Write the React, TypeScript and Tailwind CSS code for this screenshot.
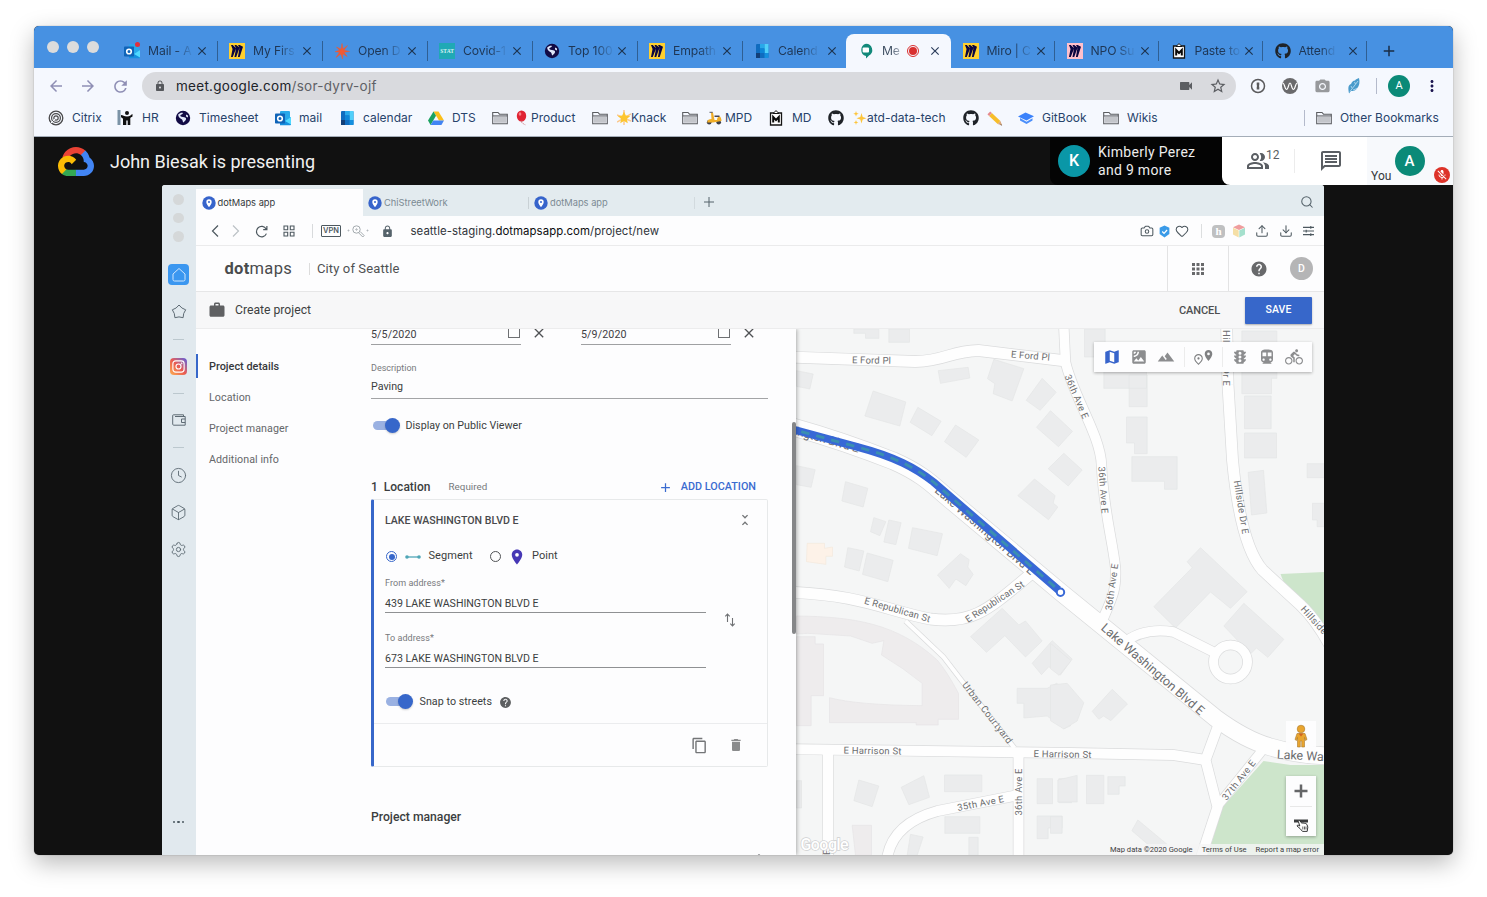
import React from "react";
import {
  MdAdd, MdApps, MdArrowBack, MdArrowForward, MdClose, MdContentCopy, MdDelete, MdDirectionsBike,
  MdDirectionsTransit, MdHelp, MdLock, MdMap, MdMicOff, MdMoreVert, MdOutlinePlace, MdOutlinePeopleAlt,
  MdPlace, MdRefresh, MdSatellite, MdStarBorder, MdTerrain, MdTraffic, MdUnfoldLess, MdVideocam, MdWork,
  MdOutlineMessage, MdPhotoCamera,
} from "react-icons/md";
import { FaGithub } from "react-icons/fa";
import { Box, Camera, Clock, Download, Heart, Search, Settings, Upload } from "lucide-react";

/* ---------- small brand drawings, all 16x16 ---------- */

const Outlook = () => (
  <svg viewBox="0 0 16 16" className="h-4 w-4">
    <rect x="5" y="1" width="10" height="10" rx="1" fill="#28a8ea" />
    <path d="M5 7l5.500 4L16 7v7.500a.8.8 0 0 1-.8.8H5z" fill="#1490df" />
    <path d="M10 11l6-4v7.500z" fill="#50d9ff" />
    <rect x="0" y="3.500" width="10" height="10" rx=".8" fill="#0f64b8" />
    <circle cx="5" cy="8.500" r="2.300" fill="none" stroke="#fff" strokeWidth="1.600" />
  </svg>
);
const OutlookBadge = () => (
  <div className="relative h-4 w-4">
    <Outlook />
    <span className="absolute -top-px right-0 h-[5px] w-[5px] rounded-full bg-[#e0303c]" />
  </div>
);
const Miro = ({ pink = false }: { pink?: boolean }) => (
  <svg viewBox="0 0 16 16" className="h-4 w-4">
    <rect width="16" height="16" fill={pink ? "#ffc0cb" : "#ffd02f"} />
    <path
      transform="translate(2 2) scale(.5)"
      fill="#0b0640"
      d="M17.392 0H13.900L17 4.808 10.444 0H6.949l3.102 6.300L3.494 0H0l3.050 8.131L0 24h3.494L10.050 6.985 6.949 24h3.494L17 5.494 13.899 24h3.493L24 3.672 17.392 0z"
    />
  </svg>
);
const Burst = () => (
  <svg viewBox="0 0 16 16" className="h-4 w-4">
    <path d="M8 .5L9 6l4.500-3.500L10 7.300l5.500 1.200L10 9.300l3.200 4.200-4.400-2.700L8.500 16l-1.700-5L2 14.500 5.500 9.300 1 8.700l4.500-1.500L2.500 4 7 6.200z" fill="#f05a33" stroke="#f05a33" strokeWidth=".5" />
  </svg>
);
const Stat = () => (
  <div className="flex h-4 w-4 items-center justify-center bg-[#20a9b5] font-['Liberation_Serif',serif] text-[5.500px] font-bold text-[#d7f3f4]">STAT</div>
);
const Globe = () => (
  <svg viewBox="0 0 16 16" className="h-4 w-4">
    <circle cx="8" cy="8" r="7.200" fill="#120b45" />
    <path d="M3.200 4.500c2-2 4-2 4.800-1.500-.5 1.500-2.600 1.500-2.800 3 1.600 1.400 4 .8 5.400 1.800 1.300 1-.3 3.600-2.400 4.600-.6-1-.3-2-1.200-2.900C5.600 8.300 3.400 8 3.200 4.500zM11 4.500l2 1v2l-2-1z" fill="#dfe6f8" />
  </svg>
);
const Calendar = () => (
  <svg viewBox="0 0 16 16" className="h-4 w-4">
    <rect x="2" y="1" width="12.500" height="14" rx="1" fill="#0f6cbf" />
    <path d="M6 1h4.500v4.500H6z" fill="#28a8ea" />
    <path d="M10.500 1h4v4.500h-4zM10.500 5.500h4V10h-4z" fill="#50d0fa" />
    <path d="M6 5.500h4.500V10H6z" fill="#0d86d8" />
    <path d="M2 10h4v5H2z" fill="#123f78" />
    <path d="M10.500 10h4v5h-4z" fill="#1490df" />
  </svg>
);
const Meet = () => (
  <svg viewBox="0 0 16 16" className="h-4 w-4">
    <path d="M8 .8a6.300 6.300 0 0 1 3 11.800L8 15.600V13A6.300 6.300 0 0 1 8 .8z" fill="#12897a" />
    <rect x="4.600" y="4.600" width="6.400" height="4.800" rx="1" fill="#fff" />
  </svg>
);
const Clipboard = () => (
  <svg viewBox="0 0 16 16" className="h-4 w-4">
    <path d="M2.500 3h11v12h-11z" fill="#fff" stroke="#141414" strokeWidth="1.300" />
    <path d="M5 3.500L8 .6l3 2.900z" fill="#fff" stroke="#141414" />
    <path d="M5.200 12.500V7L8 10l2.800-3v5.500" fill="none" stroke="#0a0a0a" strokeWidth="2" />
  </svg>
);
const Github = () => <FaGithub className="h-4 w-4 text-[#1f2328]" />;
const Citrix = () => (
  <svg viewBox="0 0 16 16" className="h-4 w-4" fill="none" stroke="#4a4a4c">
    <circle cx="8" cy="8" r="6.800" strokeWidth="1.300" />
    <circle cx="8" cy="8" r="4.400" strokeWidth="1.200" />
    <circle cx="8" cy="8" r="2.200" strokeWidth="1.200" />
    <path d="M7 9L3 13" stroke="#f5f8fe" strokeWidth="1" />
  </svg>
);
const Hr = () => (
  <svg viewBox="0 0 16 16" className="h-4 w-4">
    <path d="M.5 0h3v15h-3z" fill="#7b93a6" />
    <circle cx="10" cy="3" r="2" fill="#111" />
    <path d="M4 5c2 0 3 1.500 6 1.500S13.500 5 15.500 4v2.500c-1 .8-2 1-2.200 1.500V15h-2.600v-4.500H9.300V15H6V9C5.500 8 5 7.500 4 7.500z" fill="#111" />
  </svg>
);
const Drive = () => (
  <svg viewBox="0 0 16 16" className="h-4 w-4">
    <path d="M5.500 1.500h5L16 10.500h-5z" fill="#fbbf1a" />
    <path d="M5.500 1.500L0 10.500 2.600 15 8 5.800z" fill="#1ba261" />
    <path d="M5.400 10.500H16L13.400 15H2.600z" fill="#4285f4" />
  </svg>
);
const Folder = () => (
  <svg viewBox="0 0 16 16" className="h-4 w-4">
    <path d="M.7 2.500h5.300l1.500 1.700h7.800v9.600H.7z" fill="#f5f8fe" stroke="#5b5d61" strokeWidth="1.100" />
    <path d="M1.800 6.500h12.500v6.300H1.800z" fill="#c3c5ca" />
    <path d="M.7 5.900h14.600" stroke="#5b5d61" />
  </svg>
);
const GitBook = () => (
  <svg viewBox="0 0 16 16" className="h-4 w-4">
    <path d="M0 6.500l7.500-4L16 6.300 8.500 10.500z" fill="#3b82fb" />
    <path d="M2 8l6.500 3.700L14.500 8.300v2.300L8.500 14 2 10.500z" fill="#4b8ffb" />
  </svg>
);
const Balloon = () => (
  <svg viewBox="0 0 12 16" className="h-4 w-3">
    <ellipse cx="5.500" cy="6" rx="4.700" ry="5.600" fill="#e02434" />
    <ellipse cx="4" cy="4" rx="1.300" ry="1.800" fill="#f78088" />
    <path d="M4.500 11.300h2.200l-1 1.400zM6 12.500q1 1.500 4 2.800" fill="#d01c2c" stroke="#d9c9cc" strokeWidth=".5" />
  </svg>
);
const GlowStar = () => (
  <svg viewBox="0 0 14 16" className="h-4 w-[14px]">
    <path d="M7 0v15M0 5l14 6M14 4L0 12" stroke="#fbc98e" strokeWidth="1.500" />
    <path d="M7 1.500l1.800 4 4.400.4-3.400 3 1 4.400L7 11l-3.800 2.300 1-4.400-3.400-3 4.400-.4z" fill="#fdc62f" />
  </svg>
);
const Scooter = () => (
  <svg viewBox="0 0 16 16" className="h-4 w-4">
    <circle cx="3.200" cy="12.300" r="2.300" fill="#3c3f4a" />
    <circle cx="12.700" cy="12.300" r="2.300" fill="#3c3f4a" />
    <path d="M5 2.500h2L8.500 10H11c0-2 1-3.500 3-3.500.8 1 1.500 2.500 1.500 4.500L7 12.500H1.200C1.200 10 3 9 5.500 9z" fill="#f0ae28" />
    <path d="M8.500 5.500h5V7h-5z" fill="#4a4550" />
    <path d="M3.500 2.300h3.200" stroke="#55585f" />
  </svg>
);
const Sparkles = () => (
  <svg viewBox="0 0 14 16" className="h-4 w-[14px]" fill="#fdc53c">
    <path d="M8.500 3l1.200 4 3.800 1.200-3.800 1.300-1.200 4-1.200-4-3.800-1.300L7.300 7z" />
    <path d="M3 1l.7 2 2 .7-2 .7L3 6.500l-.7-2-2-.8 2-.7zM3 10l.6 1.800 1.800.6-1.800.7L3 15l-.6-1.900-1.800-.7 1.800-.6z" />
  </svg>
);
const Pencil = () => (
  <svg viewBox="0 0 16 16" className="h-4 w-4">
    <path d="M3.500 4.500l8.500 8" stroke="#f7bd2a" strokeWidth="4" />
    <path d="M1.800 2.900l1.700 1.600" stroke="#e58a8f" strokeWidth="4" />
    <path d="M10.700 14l2.700-2.900 1.800 4.400z" fill="#d9a578" />
    <path d="M14 14.200l1.200 1.300-1.800-.6z" fill="#333" />
  </svg>
);
const CloudLogo = () => (
  <svg viewBox="0 0 256 206" className="h-[29px] w-9">
    <path d="M170.250 56.820l22.250-22.250 1.480-9.370C153.440-11.670 89-7.490 52.460 33.910 42.310 45.410 34.780 59.750 30.760 74.550l7.970-1.120 44.500-7.340 3.440-3.510c19.800-21.740 53.270-24.670 76.130-6.170z" fill="#ea4335" />
    <path d="M224.200 73.920c-5.110-18.840-15.610-35.770-30.210-48.720L162.760 56.430c13.190 10.770 20.700 27 20.370 44.020v5.540c15.350 0 27.800 12.450 27.800 27.800s-12.450 27.490-27.800 27.490h-55.670l-5.470 5.930v33.340l5.470 5.240h55.670c39.930.31 72.550-31.550 72.860-71.480.19-24.200-11.740-46.880-31.790-60.490" fill="#4285f4" />
    <path d="M71.870 205.800h55.590v-44.510H71.870c-3.960 0-7.880-.85-11.480-2.500l-7.890 2.420-22.400 22.250-1.950 7.570c12.570 9.490 27.900 14.830 43.720 14.770" fill="#34a853" />
    <path d="M71.870 61.430C31.940 61.660-.24 94.230 0 134.160c.13 22.300 10.550 43.300 28.220 56.890l32.250-32.250c-13.990-6.320-20.210-22.780-13.890-36.780 6.320-13.990 22.790-20.200 36.780-13.880 6.170 2.780 11.100 7.720 13.890 13.880l32.250-32.240c-13.720-17.940-35.040-28.430-57.630-28.350" fill="#fbbc05" />
  </svg>
);

/* ---------- outer browser ---------- */

type Tab = { icon: React.ReactNode; label: string; bar?: boolean };
const leftTabs: Tab[] = [
  { icon: <OutlookBadge />, label: "Mail - A", bar: true },
  { icon: <Miro />, label: "My Firs", bar: true },
  { icon: <Burst />, label: "Open D", bar: true },
  { icon: <Stat />, label: "Covid-1", bar: true },
  { icon: <Globe />, label: "Top 100", bar: true },
  { icon: <Miro />, label: "Empath", bar: true },
  { icon: <Calendar />, label: "Calend" },
];
const rightTabs: Tab[] = [
  { icon: <Miro />, label: "Miro | C", bar: true },
  { icon: <Miro pink />, label: "NPO Su", bar: true },
  { icon: <Clipboard />, label: "Paste to", bar: true },
  { icon: <Github />, label: "Attend", bar: true },
];

function IdleTab({ tab, box }: { tab: Tab; box: string }) {
  return (
    <div className={"flex shrink-0 items-center pt-2 pl-[11.500px] " + box}>
      {tab.icon}
      <span className="ml-2 flex w-[47px]">
        <span className="bg-gradient-to-r from-[#1e3654] from-60% to-[#1e3654]/10 bg-clip-text font-['Inter',sans-serif] text-[12.200px] tracking-[-0.15px] whitespace-nowrap text-transparent">{tab.label}</span>
      </span>
      <MdClose className="h-[14px] w-[14px] text-[#1d3450]" />
      {tab.bar && <span className="ml-auto h-5 w-px bg-[#2f5f93]" />}
    </div>
  );
}

function TabStrip() {
  return (
    <div className="flex h-[42px] bg-[#4791e2]">
      <div className="flex w-[78.600px] shrink-0 items-center gap-2 pl-[13px]">
        {[0, 1, 2].map((i) => (
          <span key={i} className="h-3 w-3 rounded-full bg-[#dcdcdc]" />
        ))}
      </div>
      {leftTabs.map((t) => <IdleTab key={t.label} tab={t} box="w-[105px]" />)}
      <div className="mt-2 -ml-[1.600px] flex h-[34px] w-[105px] shrink-0 items-center rounded-t-lg bg-[#f5f8fe] pl-3">
        <Meet />
        <span className="ml-2 flex w-[25px]">
          <span className="bg-gradient-to-r from-[#3c4c60] from-50% to-[#3c4c60]/40 bg-clip-text font-['Inter',sans-serif] text-[12.200px] tracking-[-0.2px] text-transparent">Me</span>
        </span>
        <span className="flex h-3 w-3 items-center justify-center rounded-full border border-[#d93030]">
          <span className="h-2 w-2 rounded-full bg-[#d93030]" />
        </span>
        <MdClose className="ml-[9px] h-[14px] w-[14px] text-[#2c3e5c]" />
      </div>
      {rightTabs.map((t) => <IdleTab key={t.label} tab={t} box="w-[104px]" />)}
      <MdAdd className="mt-[16px] ml-[13px] h-[18px] w-[18px] text-[#1a2c44]" />
    </div>
  );
}

function Toolbar() {
  return (
    <div className="flex h-9 items-center bg-[#f5f8fe]">
      <div className="flex w-[108px] shrink-0 items-center gap-[14px] pl-[13px] text-[#8f8fb5]">
        <MdArrowBack className="h-[18px] w-[18px]" />
        <MdArrowForward className="h-[18px] w-[18px]" />
        <MdRefresh className="h-[19px] w-[19px]" />
      </div>
      <div className="flex h-7 w-[1094px] shrink-0 items-center rounded-full bg-[#d9dade] pl-3">
        <MdLock className="h-3 w-3 text-[#56585c]" />
        <span className="ml-[10px] font-['Inter',sans-serif] text-[13.500px] tracking-[0.28px] text-[#202329]">
          meet.google.com<span className="text-[#5f6166]">/sor-dyrv-ojf</span>
        </span>
        <MdVideocam className="ml-auto h-4 w-4 text-[#5c5e62]" />
        <MdStarBorder className="mr-[9px] ml-[15px] h-[18px] w-[18px] text-[#5c5e62]" />
      </div>
      <div className="ml-[6px] flex w-8 justify-center">
        <svg viewBox="0 0 16 16" className="h-4 w-4">
          <circle cx="8" cy="8" r="6.500" fill="none" stroke="#5a5a5c" strokeWidth="1.500" />
          <path d="M6.700 4.500h2.600v2.800L8.800 8l.5.700v2.800H6.700V8.700l.5-.7-.5-.7z" fill="#5a5a5c" />
        </svg>
      </div>
      <div className="flex w-8 justify-center">
        <svg viewBox="0 0 16 16" className="h-4 w-4">
          <circle cx="8" cy="8" r="8" fill="#6a6a6c" />
          <path d="M.5 5C3 5 2.500 11.500 4.500 11.500S6.500 5 8 5s1.500 6.500 3.500 6.500S13 5 15.500 5" fill="none" stroke="#fff" strokeWidth="1.200" />
        </svg>
      </div>
      <div className="flex w-8 justify-center"><MdPhotoCamera className="h-[17px] w-[17px] text-[#97999c]" /></div>
      <div className="flex w-8 justify-center">
        <svg viewBox="0 0 16 16" className="h-4 w-4">
          <path d="M13 0c1 4 .5 8-2 10.500-2 2.500-4 2.500-6 2.500L3 15.500C2 10 2 7 5 6c1-2 2-3.500 4-3.500C10 1 11.500.5 13 0z" fill="#4a9bcb" />
          <path d="M4 13.500L12 3M5 8l1 2M8.500 4l1 2M7 12l4-1.500" stroke="#bfe0f3" strokeWidth=".8" />
        </svg>
      </div>
      <span className="ml-[6px] h-4 w-px bg-[#b4bacb]" />
      <span className="ml-[11px] flex h-[22px] w-[22px] items-center justify-center rounded-full bg-[#0b8a78] font-['Roboto',sans-serif] text-[11px] text-white">A</span>
      <MdMoreVert className="ml-[13px] h-[18px] w-[18px] text-[#1c1650]" />
    </div>
  );
}

function Bookmark({ icon, label, extra, box, gap = "gap-2" }: { icon: React.ReactNode; label?: string; extra?: React.ReactNode; box: string; gap?: string }) {
  return (
    <div className={"flex shrink-0 items-center whitespace-nowrap " + box + " " + gap}>
      {icon}
      <span className="flex items-center">
        {extra}
        <span className="font-['Inter',sans-serif] text-[12px] text-[#27436b]">{label}</span>
      </span>
    </div>
  );
}

function Bookmarks() {
  return (
    <div className="flex h-[33px] items-center border-b border-[#a4adb8] bg-[#f5f8fe] pb-[4px] pl-[14px]">
      <Bookmark icon={<Citrix />} label="Citrix" box="w-[69px]" />
      <Bookmark icon={<Hr />} label="HR" box="w-[58px]" gap="gap-[9px]" />
      <Bookmark icon={<Globe />} label="Timesheet" box="w-[100px]" />
      <Bookmark icon={<Outlook />} label="mail" box="w-[64px]" />
      <Bookmark icon={<Calendar />} label="calendar" box="w-[89px]" />
      <Bookmark icon={<Drive />} label="DTS" box="w-[64px]" />
      <Bookmark icon={<Folder />} extra={<span className="mr-[3px]"><Balloon /></span>} label="Product" box="w-[100px]" />
      <Bookmark icon={<Folder />} extra={<GlowStar />} label="Knack" box="w-[90px]" gap="gap-[9px]" />
      <Bookmark icon={<Folder />} extra={<span className="mr-[3px]"><Scooter /></span>} label="MPD" box="w-[86px]" />
      <Bookmark icon={<Clipboard />} label="MD" box="w-[60px]" />
      <Bookmark icon={<Github />} extra={<Sparkles />} label="atd-data-tech" box="w-[135px]" gap="gap-[9px]" />
      <Bookmark icon={<Github />} extra={<Pencil />} box="w-[55px]" />
      <Bookmark icon={<GitBook />} label="GitBook" box="w-[85px]" />
      <Bookmark icon={<Folder />} label="Wikis" box="w-[201px]" />
      <span className="mr-[11px] h-4 w-px bg-[#b4bacb]" />
      <Bookmark icon={<Folder />} label="Other Bookmarks" box="w-[130px]" />
    </div>
  );
}

/* ---------- meeting header ---------- */

function MeetHeader() {
  return (
    <div className="flex h-12 shrink-0 font-['Roboto',sans-serif]">
      <div className="flex flex-1 items-center pl-6">
        <CloudLogo />
        <span className="ml-4 text-[18px] text-[#f1f1f1]">John Biesak is presenting</span>
      </div>
      <div className="flex w-[172px] items-center rounded-bl-lg bg-[#040404] pl-2">
        <span className="flex h-8 w-8 items-center justify-center rounded-full bg-[#0a97a7] text-[16px] font-medium text-white">K</span>
        <span className="ml-2 text-[14px] leading-[18px] tracking-[0.3px] text-[#ededed]">
          Kimberly Perez
          <br />
          and 9 more
        </span>
      </div>
      <div className="flex w-[145px] bg-[#040404]">
        <div className="flex w-[145px] items-center rounded-bl-lg bg-white text-[#5a5e63]">
          <div className="flex w-[73px] items-center border-r border-[#ececec] pl-6">
            <MdOutlinePeopleAlt className="h-6 w-6" />
            <span className="-mt-3 -ml-[4px] text-[12px]">12</span>
          </div>
          <div className="flex w-[72px] justify-center"><MdOutlineMessage className="h-6 w-6" /></div>
        </div>
      </div>
      <div className="flex w-[86px] bg-[#f7f9fc]">
        <span className="mt-[31px] ml-1 text-[12px] leading-4 tracking-[0.1px] text-[#35383b]">You</span>
        <span className="mt-[9px] ml-[3px] flex h-[30px] w-[30px] items-center justify-center rounded-full bg-[#0b8a78] text-[15px] font-medium text-white">A</span>
        <span className="mt-[30px] ml-[9px] flex h-4 w-4 items-center justify-center rounded-full bg-[#dd3329]">
          <MdMicOff className="h-3 w-3 text-white" />
        </span>
      </div>
    </div>
  );
}

/* ---------- shared screen ---------- */

function OperaSidebar() {
  const thin = "h-[17px] w-[17px] text-[#5e6b74]";
  return (
    <div className="flex w-[34px] shrink-0 flex-col items-center bg-[#e1e9ee] pr-[1px]">
      <div className="mt-[9px] flex flex-col gap-[8px]">
        {[0, 1, 2].map((i) => (
          <span key={i} className="h-[10.500px] w-[10.500px] rounded-full bg-[#d5d8d9]" />
        ))}
      </div>
      <div className="mt-[22.500px] flex h-[21px] w-[21px] items-center justify-center rounded-sm bg-[#3b97f0]">
        <svg viewBox="0 0 16 16" className="h-4 w-4" fill="none" stroke="#cfe6fd">
          <path d="M2 7l6-5.500L14 7v5.500A1.500 1.500 0 0 1 12.500 14h-9A1.500 1.500 0 0 1 2 12.500z" />
        </svg>
      </div>
      <svg viewBox="0 0 16 16" className="mt-[19px] h-4 w-4" fill="none" stroke="#5e6b74">
        <path d="M8 1l2.900 3L14.700 5.800l-2 3.700-.6 4.200L8 12.900l-4.100.8-.6-4.200-2-3.700L5.100 4z" strokeLinejoin="round" />
      </svg>
      <span className="mt-[19px] h-px w-[11px] bg-[#bcc8ce]" />
      <div className="mt-[18px] flex h-[17px] w-[17px] items-center justify-center rounded bg-gradient-to-tr from-[#fbad50] via-[#e95950] to-[#5851db]">
        <svg viewBox="0 0 16 16" className="h-[15px] w-[15px]" fill="none" stroke="#fff" strokeWidth="1.200">
          <rect x="2" y="2" width="12" height="12" rx="3" />
          <circle cx="8" cy="8" r="2.700" />
          <circle cx="11.300" cy="4.700" r=".3" />
        </svg>
      </div>
      <span className="mt-[18px] h-px w-[11px] bg-[#bcc8ce]" />
      <svg viewBox="0 0 14 14" className="mt-[19px] h-[14px] w-[14px]" fill="none" stroke="#5e6b74">
        <path d="M11.500 3.500V1.800H1.500a.8.8 0 0 0-.8.900v8.500c0 .6.400 1 1 1h11.500V3.500H3M13.200 6H9.500v3.500h3.700" />
      </svg>
      <span className="mt-[20px] h-px w-[11px] bg-[#bcc8ce]" />
      <Clock className={"mt-[19px] " + thin} strokeWidth={1.300} />
      <Box className={"mt-[20px] " + thin} strokeWidth={1.300} />
      <Settings className={"mt-[20px] " + thin} strokeWidth={1.300} />
      <div className="mt-auto mb-[32px] flex gap-[2px]">
        {[0, 1, 2].map((i) => (
          <span key={i} className="h-[2.500px] w-[2.500px] rounded-full bg-[#4b5961]" />
        ))}
      </div>
    </div>
  );
}

const PinBadge = () => (
  <svg viewBox="0 0 14 14" className="h-[14px] w-[14px] shrink-0">
    <circle cx="7" cy="7" r="6.700" fill="#3764cb" />
    <path d="M7 11.200C5.500 9 4.300 7.600 4.300 5.900a2.700 2.700 0 0 1 5.400 0C9.700 7.600 8.500 9 7 11.200z" fill="#fff" />
    <circle cx="7" cy="5.900" r="1" fill="#3764cb" />
  </svg>
);

function OperaTabs() {
  return (
    <div className="flex h-[31px] shrink-0 items-end bg-[#e3ebef] font-['Inter',sans-serif] text-[9.300px]">
      <div className="flex h-[27px] w-[167px] items-center gap-[2px] bg-[#fdfdfe] pl-[5.500px] text-[#33373a]">
        <PinBadge />
        <span>dotMaps app</span>
      </div>
      <div className="flex h-[27px] w-[166px] items-center gap-[2px] pl-[5px] text-[#7b8a93]">
        <PinBadge />
        <span>ChiStreetWork</span>
        <span className="ml-auto h-3 w-px bg-[#c9d1d5]" />
      </div>
      <div className="flex h-[27px] w-[166px] items-center gap-[2px] pl-[5px] text-[#7b8a93]">
        <PinBadge />
        <span>dotMaps app</span>
        <span className="ml-auto h-3 w-px bg-[#d2dade]" />
      </div>
      <svg viewBox="0 0 12 12" className="mb-[8px] ml-[8px] h-3 w-3" stroke="#55626a"><path d="M6 1v10M1 6h10" /></svg>
      <Search className="mr-[10px] mb-[7px] ml-auto h-[14px] w-[14px] text-[#55626a]" strokeWidth={1.800} />
    </div>
  );
}

function OperaToolbar() {
  return (
    <div className="flex h-[30px] shrink-0 items-center border-b border-[#ebebec] pt-px pl-[8px] text-[#4d585f]">
      <svg viewBox="0 0 21 14" className="h-[14px] w-[21px]" fill="none" stroke="currentColor" strokeWidth="1.200"><path d="M14 1.500L8.500 7l5.500 5.500" /></svg>
      <svg viewBox="0 0 21 14" className="h-[14px] w-[21px]" fill="none" stroke="#bcc2c6" strokeWidth="1.200"><path d="M8 1.500L13.500 7 8 12.500" /></svg>
      <svg viewBox="0 0 14 14" className="mr-[10px] ml-[9px] h-[13px] w-[13px]" fill="none" stroke="currentColor" strokeWidth="1.300">
        <path d="M12.300 9.300A5.600 5.600 0 1 1 12 4.300M12.800 1v4H8.800" />
      </svg>
      <svg viewBox="0 0 12 12" className="mx-[5px] h-3 w-3" fill="none" stroke="currentColor" strokeWidth="1.100">
        <path d="M1 1h3.700v3.700H1zM7.300 1H11v3.700H7.300zM1 7.300h3.700V11H1zM7.300 7.300H11V11H7.300z" />
      </svg>
      <span className="ml-[12px] h-[14px] w-px bg-[#d8dadc]" />
      <span className="ml-[8px] flex h-[12px] w-[20px] items-center justify-center rounded-[1px] border border-[#4d585f] font-['Inter',sans-serif] text-[7.500px] font-semibold text-[#4d585f]">VPN</span>
      <svg viewBox="0 0 22 14" className="ml-[6px] h-[14px] w-[22px]" fill="none" stroke="#a4abaf">
        <circle cx="9.500" cy="5.500" r="3.700" />
        <circle cx="9.500" cy="5.500" r=".7" />
        <path d="M11.500 8.700l4.300 4.300 1.300-1.500-4-4" />
        <circle cx="1.500" cy="6.500" r=".5" />
        <circle cx="20.500" cy="6.500" r=".5" />
      </svg>
      <MdLock className="ml-[12px] h-[13px] w-[13px] text-[#56636b]" />
      <span className="ml-[16.500px] pt-px font-['Inter',sans-serif] text-[11.400px] tracking-[0.06px] text-[#30343a]">
        seattle-staging.<span className="text-[#0c0d0f]">dotmapsapp.com</span>/project/new
      </span>
      <div className="ml-auto flex items-center">
        <Camera className="mx-[2px] h-[14px] w-[14px]" strokeWidth={1.800} />
        <svg viewBox="0 0 12 14" className="mx-[3px] h-[13px] w-[11px]">
          <path d="M6 .5l5.300 2.300v7L6 13.500.7 9.800v-7z" fill="#3a9be8" />
          <path d="M3.500 7l2 2 3.300-3.600" fill="none" stroke="#fff" strokeWidth="1.400" />
        </svg>
        <Heart className="mx-[2px] h-[14px] w-[14px]" strokeWidth={1.800} />
        <span className="mx-[10px] h-[14px] w-px bg-[#dcdedf]" />
        <span className="flex h-[13px] w-[13px] items-center justify-center rounded-sm bg-[#bfc0c1] font-['Liberation_Serif',serif] text-[11px] font-bold text-white">h</span>
        <svg viewBox="0 0 14 14" className="ml-[7px] h-[14px] w-[14px]">
          <path d="M7 .5l6 2.700L7 6 1 3.200z" fill="#ef9d9d" />
          <path d="M1 3.800l5.700 2.800v6.800L1 10.600z" fill="#f5dfa6" />
          <path d="M13 3.800L7.300 6.600v6.800l5.700-2.800z" fill="#a5e0cd" />
        </svg>
        <Upload className="ml-[9px] h-[14px] w-[14px]" strokeWidth={1.800} />
        <Download className="ml-[10px] h-[14px] w-[14px]" strokeWidth={1.800} />
        <svg viewBox="0 0 12 12" className="mx-[10px] h-3 w-[11px]" fill="none" stroke="currentColor" strokeWidth="1.200">
          <path d="M0 2h12M0 6h12M0 10h12M8.500.5v3M3.500 4.500v3M8.500 8.500v3" />
        </svg>
      </div>
    </div>
  );
}

function AppHeader() {
  return (
    <div className="flex h-[46px] shrink-0 items-center border-b border-[#e6e6e7] bg-[#fdfdfe] font-['Roboto',sans-serif] text-[#4a4b4d]">
      <span className="ml-[28.500px] w-[84.500px] text-[16.500px] leading-5 tracking-[0.3px]">
        <b className="font-bold">dot</b>maps
      </span>
      <span className="h-3 w-px bg-[#dcdcdc]" />
      <span className="ml-[7px] pt-px text-[13px] tracking-[0.12px] text-[#4f5153]">City of Seattle</span>
      <div className="ml-auto flex h-full items-center">
        <div className="flex h-full w-[62px] items-center justify-center border-x border-[#e3e3e4]">
          <MdApps className="h-[18px] w-[18px] text-[#68696b]" />
        </div>
        <MdHelp className="ml-[21px] h-[18px] w-[18px] text-[#68696b]" />
        <span className="mr-[11px] ml-[22px] flex h-[23px] w-[23px] items-center justify-center rounded-full bg-[#b5b5b6] text-[10.500px] font-medium text-white">D</span>
      </div>
    </div>
  );
}

function ActionBar() {
  return (
    <div className="flex h-[37px] shrink-0 items-center border-b border-[#ececed] bg-[#f7f7f8] pl-[12px] font-['Roboto',sans-serif]">
      <MdWork className="h-[18px] w-[18px] text-[#5f6062]" />
      <span className="ml-[9px] pt-px text-[12.200px] text-[#3d3f41]">Create project</span>
      <span className="ml-auto pt-[2px] text-[11px] font-medium tracking-[-0.1px] text-[#4e4f51]">CANCEL</span>
      <span className="mr-[12px] ml-[25px] flex h-[27px] w-[67px] items-center justify-center rounded-[1px] bg-[#3767ca] text-[10.500px] font-medium tracking-[0.1px] text-white shadow-[0_1px_2px_rgba(0,0,0,0.3)]">SAVE</span>
    </div>
  );
}

const Switch = () => (
  <span className="relative -mt-[2px] -ml-px h-[15px] w-[28px]">
    <span className="absolute top-[3px] left-px h-[9px] w-[23px] rounded-full bg-[#9ab1e2]" />
    <span className="absolute top-0 right-0 h-[15px] w-[15px] rounded-full bg-[#3767ca] shadow-[0_1px_2px_rgba(0,0,0,0.2)]" />
  </span>
);

function DateField({ value }: { value: string }) {
  return (
    <div className="flex h-[16px] w-[210px] shrink-0 items-start">
      <div className="flex h-[16px] w-[150px] items-start justify-between border-b border-[#9fa0a2]">
        <span className="text-[10.700px] leading-[12px] tracking-[0.1px] text-[#3e4043]">{value}</span>
        <span className="mr-px h-[9px] w-[12px] border border-t-0 border-[#6e7073]" />
      </div>
      <MdClose className="-mt-[4px] ml-[10px] h-4 w-4 text-[#505255]" />
    </div>
  );
}

function Field({ label, value }: { label: string; value: string }) {
  return (
    <div>
      <div className="flex h-[16px] items-center pt-[2px] text-[9px] tracking-[0.06px] text-[#77797c]">{label}</div>
      <div className="flex h-[22px] items-center border-b border-[#8f9193] pt-[5px] text-[10.600px] text-[#3b3d40]">{value}</div>
    </div>
  );
}

function LocationCard() {
  return (
    <div className="flex h-[268px] w-[397px] flex-col rounded-[2px] border border-l-[3px] border-[#e7e9ea] border-l-[#3767ca]">
      <div className="mt-[10px] flex h-5 items-center justify-between pr-[14px] pl-[11px]">
        <span className="pt-[2px] text-[10.600px] font-medium text-[#48494c]">LAKE WASHINGTON BLVD E</span>
        <MdUnfoldLess className="h-[16px] w-[16px] text-[#737577]" />
      </div>
      <div className="mt-[14px] flex h-6 items-center pt-px pl-[12px] text-[11px] tracking-[0.05px] text-[#3b3d40]">
        <span className="flex h-[11px] w-[11px] items-center justify-center rounded-full border border-[#3767ca]">
          <span className="h-[6px] w-[6px] rounded-full bg-[#3767ca]" />
        </span>
        <svg viewBox="0 0 16 6" className="ml-[8px] h-[6px] w-4">
          <path d="M2 3h12" stroke="#4fa6b6" strokeWidth="1.300" />
          <circle cx="2" cy="3" r="1.800" fill="#4fa6b6" />
          <circle cx="14" cy="3" r="1.800" fill="#4fa6b6" />
        </svg>
        <span className="ml-[7.500px] w-[61px]">Segment</span>
        <span className="h-[11px] w-[11px] rounded-full border border-[#505255]" />
        <MdPlace className="ml-[7px] h-[18px] w-[18px] text-[#4637b5]" />
        <span className="ml-[6.500px]">Point</span>
      </div>
      <div className="mt-[7px] flex items-center pl-[11px]">
        <div className="flex w-[321px] flex-col gap-[17px]">
          <Field label="From address*" value="439 LAKE WASHINGTON BLVD E" />
          <Field label="To address*" value="673 LAKE WASHINGTON BLVD E" />
        </div>
        <svg viewBox="0 0 12 14" className="-mt-[3px] ml-[18px] h-[14px] w-3" fill="none" stroke="#6e7073" strokeWidth="1.100">
          <path d="M3.500 9V1M1.300 3.300L3.500 1l2.200 2.300M8.500 5v8M6.300 10.700L8.500 13l2.200-2.300" />
        </svg>
      </div>
      <div className="mt-[22px] flex h-6 items-center pt-px pl-[12px] text-[10.700px] text-[#3b3d40]">
        <Switch />
        <span className="ml-[6.500px] tracking-[0.05px]">Snap to streets</span>
        <MdHelp className="ml-[7px] h-[13px] w-[13px] text-[#5d5f61]" />
      </div>
      <div className="mt-auto flex h-[43px] items-center justify-end border-t border-[#ebecee] pr-[23px] text-[#737577]">
        <MdContentCopy className="h-[17px] w-[17px]" />
        <MdDelete className="ml-[20px] h-[16px] w-[16px] text-[#8a8b8c]" />
      </div>
    </div>
  );
}

function FormPanel() {
  const nav = ["Project details", "Location", "Project manager", "Additional info"];
  return (
    <div className="relative z-10 flex w-[599.500px] shrink-0 bg-[#fdfdfe] font-['Roboto',sans-serif] shadow-[1px_0_4px_rgba(0,0,0,0.3)]">
      <div className="w-[175px] shrink-0 pt-[22px]">
        {nav.map((n, i) => (
          <div key={n} className="flex h-[31px] items-center">
            <span className={i === 0 ? "-mt-px h-6 w-[2px] bg-[#3767ca]" : "h-6 w-[2px]"} />
            <span className={i === 0 ? "ml-[11px] pt-px text-[10.900px] font-medium text-[#36383b]" : "ml-[11px] pt-px text-[10.700px] tracking-[0.06px] text-[#65676a]"}>{n}</span>
          </div>
        ))}
      </div>
      <div className="w-[397px] shrink-0">
        <div className="flex">
          <DateField value="5/5/2020" />
          <DateField value="5/9/2020" />
        </div>
        <div className="mt-[15px] flex h-[16px] items-center pt-[2px] text-[9px] text-[#77797c]">Description</div>
        <div className="flex h-[23px] items-center border-b border-[#a3a4a6] text-[10.700px] text-[#3b3d40]">Paving</div>
        <div className="mt-[15px] flex h-6 items-center pl-[2px] text-[10.700px] text-[#3b3d40]">
          <Switch />
          <span className="ml-[5.500px]">Display on Public Viewer</span>
        </div>
        <div className="mt-[37px] flex h-6 items-center">
          <span className="text-[12px] font-medium text-[#3b3d40]">1</span>
          <span className="ml-[6px] text-[12px] font-medium text-[#3b3d40]">Location</span>
          <span className="ml-[18px] text-[9.800px] tracking-[0.06px] text-[#77797c]">Required</span>
          <MdAdd className="ml-auto h-[15px] w-[15px] text-[#3a6bd0]" />
          <span className="mr-[12px] ml-[7.500px] pt-px text-[10.800px] font-medium text-[#3a6bd0]">ADD LOCATION</span>
        </div>
        <LocationCard />
        <div className="mt-[40px] flex h-5 items-center text-[12.200px] font-medium text-[#3b3d40]">Project manager</div>
        <svg viewBox="0 0 8 3" className="mt-[27px] mr-[5px] ml-auto h-[3px] w-2"><path d="M0 3L4 0l4 3z" fill="#77797c" /></svg>
      </div>
      <span className="absolute top-[93px] right-0 h-[212px] w-[3.500px] rounded-full bg-[#858688]" />
    </div>
  );
}

/* ---------- map drawing ---------- */

const roads: { d: string; w: number }[] = [
  { d: "M905 621L943 657 963 683 1014 748", w: 4 },
  { d: "M785 357L915 361.500C945 361 950 351 978 350.500L1066 361", w: 11 },
  { d: "M1063 320L1065 362C1072 395 1100 435 1101 465C1103 510 1112 540 1115 568C1116 590 1112 597 1102 620", w: 9.500 },
  { d: "M1226 320L1227.500 385 1232 460Q1240 545 1262 570L1300 605Q1316 620 1332 650", w: 11 },
  { d: "M785 592C860 594 890 612 930 619C975 625 990 607 1034 571", w: 11 },
  { d: "M785 749L1070 753 1173 755 1205 760", w: 10 },
  { d: "M1219 722L1205 760 1217 807 1199 862", w: 10 },
  { d: "M1217 806L1262 750", w: 9 },
  { d: "M1018 753V865", w: 10 },
  { d: "M1018 795L937 811Q890 824 886 862", w: 10 },
  { d: "M827.500 749V865", w: 10.500 },
  { d: "M1122 644Q1142 627 1173 632L1213 652", w: 9.500 },
  { d: "M785 425C830 437 870 452 893 461C925 475 935 488 950 500L1060 592 1215 718Q1245 740 1270 747Q1300 756 1335 756", w: 17 },
];
const route = "M793 429.500L857 447C895 457 915 468 933 482L1058 590";

const Label = ({ x, y, r = 0, len, size = 9.500, children }: { x: number; y: number; r?: number; len: number; size?: number; children: string }) => (
  <text x={x} y={y} transform={`rotate(${r} ${x} ${y})`} textLength={len} fontSize={size} textAnchor="middle" dominantBaseline="central">
    {children}
  </text>
);

function StreetMap() {
  return (
    <svg viewBox="795.5 329.500 528.5 525" className="h-full w-full bg-[#f5f6f6]" fontFamily="Roboto, sans-serif">
      <g fill="#cde5cb">
        <path d="M1280 574L1324 572V640L1290 600z" />
        <path d="M1263 761L1290 765H1324V856H1207L1222 807z" />
      </g>
      <g transform="translate(790 325) scale(.33333)" fill="#ebeced" stroke="#e4e5e6" strokeWidth="2">
        <path d="M190 12h75v28h-40v-15h-35zM295 12h62v40h-62zM18 137l50 10-10 45-40-8z" />
        <path d="M443 137l90-10 5 32-88 16zM248 198l98 33-18 72-105-30zM382 247l70 42-28 43-65-40zM495 300l70 45-38 52-65-47z" />
        <path d="M610 103l90 28-35 97-57-22 5-30-22-15zM755 160l42 42-48 54-42-30zM780 257l66 62-42 46-66-58zM820 385l55 50-42 48-60-52z" />
        <path d="M732 462l62 50-6 22 14 12-28 38-92-72zM18 422l56 12-12 53-44-8zM165 470l67 20-14 56-64-18zM250 578l36 12-18 42-28-12zM295 585l37 8-16 66-36-8z" />
        <path d="M366 608l90 18-16 66-86-22zM172 668l48 10-14 60-44-12zM230 684l78 22-16 64-76-22zM510 686l26 18-4 22 16 22-22 34-30-20-20 28-35-40z" />
        <path d="M50 655h52v15l24-4v28h-20v24l-58-8z" fill="#fdf2e8" stroke="#f3e8dd" />
        <path d="M882 12h62v84h-62zM940 140h128v50h-128zM1016 150h54v95h-54zM1008 276h62v110h-38v-32h-24zM1024 395h136v98h-38v-24h-98z" />
        <path d="M1354 18h105v142h-16v46h-89zM1362 213h80v98h-80zM1362 324h96v75h-96zM1373 442l46-6 10 128-46 6zM1550 416h52v42h-52zM1566 535h40v70h-26v-20h-14z" />
      </g>
      <g transform="translate(790 590) scale(.33333)" fill="#eeeced" stroke="#e6e4e5" strokeWidth="2">
        <path d="M18 78C190 80 320 100 440 210Q470 245 504 310V388H443V405H377V398H117V323Q200 345 395 347V280Q340 235 273 195L280 152 245 160 180 138 52 130 18 132z" />
        <path d="M18 140h56v22h25v155h-37v90H18z" />
        <path d="M185 706h58v90h-48z" />
      </g>
      <g transform="translate(790 590) scale(.33333)" fill="#ebeced" stroke="#e4e5e6" strokeWidth="2">
        <path d="M205 570l60 18-20 62-55-18zM332 592l68-35 17 65-62 22zM462 555h112v50h-112zM463 680h105v50h-105zM360 733l38 8-18 55h-30zM535 742h28v54h-28zM18 572h15v82H18z" />
        <path d="M540 140l95-85 50 50 20-12 50 60-50 48-62-64-55 50zM785 152l60 55-35 48-35-25-22 24-28-34zM680 295h90l28-15 42 28v100l-20 8-50-38-70 6v-44h-20z" />
        <path d="M740 566h46v75h-46zM805 566h38v72h-38zM740 678h75v36h-42v32h-33z" />
      </g>
      <g transform="translate(1050 590) scale(.33333)" fill="#ebeced" stroke="#e4e5e6" strokeWidth="2">
        <path d="M310 50L425-67 410-85 450-127 590 5 540 55 480 6 375 114z" />
        <path d="M580 40l120 108-48 54-34-28-18 18-80-84zM0 160l62 52-36 44-26-20zM0 285l50-5 50 58-20 55-40 24-40-25zM185 298l46 44-50 50-22-14-14 10-20-24z" />
        <path d="M22 570l58-14v80H22zM108 556h52v85h-52zM172 560h52v28h-18v25h-34zM0 680h35v50H0zM262 690l90 75-20 32-88-75z" />
      </g>
      <g fill="none" stroke="#dadbdc">
        {roads.map((r) => <path key={r.d} d={r.d} strokeWidth={r.w + 1.400} />)}
        <circle cx="1230" cy="662" r="17" strokeWidth="10.400" />
      </g>
      <g fill="none" stroke="#fefefe" strokeLinejoin="round">
        {roads.map((r) => <path key={r.d} d={r.d} strokeWidth={r.w} />)}
        <circle cx="1230" cy="662" r="17" strokeWidth="9" />
      </g>
      <g fill="#6c6d6f">
        <Label x={871} y={360} r={1} len={39}>E Ford Pl</Label>
        <Label x={1030} y={355.500} r={5} len={39}>E Ford Pl</Label>
        <Label x={1076.500} y={396.500} r={67} len={47}>36th Ave E</Label>
        <Label x={1103} y={490} r={86} len={47}>36th Ave E</Label>
        <Label x={1111} y={587} r={-82} len={47}>36th Ave E</Label>
        <Label x={1226} y={358} r={90} len={56}>Hillside Dr E</Label>
        <Label x={1241} y={507} r={81} len={54}>Hillside Dr E</Label>
        <Label x={1321} y={628} r={48} len={56}>Hillside Dr E</Label>
        <Label x={897} y={609.500} r={16} len={68}>E Republican St</Label>
        <Label x={994} y={601.500} r={-33} len={68}>E Republican St</Label>
        <Label x={987} y={712.500} r={52} len={75}>Urban Courtyard</Label>
        <Label x={872} y={750.500} r={1} len={58}>E Harrison St</Label>
        <Label x={1062} y={754} r={1} len={58}>E Harrison St</Label>
        <Label x={980} y={803} r={-11} len={47}>35th Ave E</Label>
        <Label x={1017.500} y={792} r={-90} len={47}>36th Ave E</Label>
        <Label x={1238} y={780} r={-52} len={48}>37th Ave E</Label>
        <Label x={826} y={873} r={-90} len={47}>35th Ave E</Label>
        <Label x={1152.500} y={669} r={41} len={132} size={12.500}>Lake Washington Blvd E</Label>
        <Label x={1342} y={757.500} r={3} len={131} size={12.500}>Lake Washington Blvd E</Label>
        <Label x={984.500} y={530.500} r={41} len={128} size={12}>Lake Washington Blvd E</Label>
        <Label x={800} y={432} r={16} len={122} size={12}>Lake Washington Blvd E</Label>
      </g>
      <path d={route} fill="none" stroke="#3868d6" strokeWidth="7.800" />
      <path d={route} fill="none" stroke="#3b8fb0" strokeWidth="2.800" strokeDasharray="8.500 7" strokeDashoffset="-8" />
      <circle cx="1060" cy="592.300" r="3.700" fill="#fff" stroke="#3868d6" strokeWidth="2" />
      <text x="800" y="849.500" fontSize="16" textLength="48" fill="#fff" stroke="#cfd0d1" strokeWidth="1.400" paintOrder="stroke" fontWeight="500">Google</text>
    </svg>
  );
}

function MapTools() {
  const gray = "h-[18px] w-[18px] text-[#8c8d8f]";
  return (
    <div className="absolute top-[13px] right-[12px] flex h-[30px] w-[218.500px] items-center bg-[#fdfdfe] pl-[9px] shadow-[0_1px_3px_rgba(0,0,0,0.3)]">
      <MdMap className="h-[18px] w-[18px] text-[#3764cb]" />
      <MdSatellite className={"ml-[9px] " + gray} />
      <MdTerrain className={"ml-[9px] " + gray} />
      <span className="ml-[9px] h-5 w-px bg-[#ececec]" />
      <MdOutlinePlace className="mt-[4px] ml-[7px] h-[13px] w-[13px] text-[#7f8082]" />
      <MdPlace className="-mt-[4px] -ml-[3px] h-[13px] w-[13px] text-[#7f8082]" />
      <span className="ml-[7px] h-5 w-px bg-[#ececec]" />
      <MdTraffic className={"ml-[8px] " + gray} />
      <MdDirectionsTransit className={"ml-[9px] " + gray} />
      <MdDirectionsBike className={"ml-[9px] " + gray} />
    </div>
  );
}

function MapPanel() {
  return (
    <div className="relative min-w-0 flex-1 overflow-hidden font-['Roboto',sans-serif]">
      <StreetMap />
      <MapTools />
      <div className="absolute right-[8px] bottom-[105px] flex h-[29px] w-[30px] items-center justify-center bg-[#fdfdfe]/95">
        <svg viewBox="0 0 14 24" className="h-6 w-[14px]" fill="#e9a52f" stroke="#a9792c" strokeWidth=".6">
          <path d="M3 9.500h8l2 6-1.500 1-1-3v9.500H7.700V17h-1.400v6H3.500v-9.500l-1 3-1.500-1z" />
          <circle cx="7" cy="5" r="3.800" />
          <path d="M4.500 9.500h5L7 12.500z" fill="#d2641e" stroke="none" />
        </svg>
      </div>
      <div className="absolute right-[8px] bottom-[19px] flex h-[60px] w-[30px] flex-col items-center bg-[#fdfdfe] shadow-[0_1px_3px_rgba(0,0,0,0.3)]">
        <svg viewBox="0 0 14 14" className="mt-[8px] h-[14px] w-[14px]" stroke="#656668" strokeWidth="2.500"><path d="M7 .5v13M.5 7h13" /></svg>
        <span className="mt-[8px] h-px w-[22px] bg-[#e8e8e8]" />
        <svg viewBox="0 0 16 16" className="mt-[10px] ml-[2px] h-4 w-4">
          <path d="M0 4h14" stroke="#3b3c3e" strokeWidth="3" />
          <path d="M4.500 5c-.8-1 .8-2 1.600-1l1.700 2.300 1-.4 1.500.4 1.500.2 1.200 1 .8 2.600-.6 4.300H8.500L6 11.500 3 9c.2-1.300 1.500-1 2.800 0z" fill="#fff" stroke="#202122" strokeWidth=".9" />
          <path d="M8.800 9.500v3M10.500 9.500v3M12 9.500v3" stroke="#202122" strokeWidth=".7" />
        </svg>
      </div>
      <div className="absolute right-0 bottom-0 flex h-[11px] items-center bg-[#f5f5f5]/80 pt-px pr-[5px] text-[7.600px] text-[#3c3d3f]">
        <span>Map data ©2020 Google</span>
        <span className="ml-[9px]">Terms of Use</span>
        <span className="ml-[9px]">Report a map error</span>
      </div>
    </div>
  );
}

export default function App() {
  return (
    <div className="flex h-[897px] w-[1487px] bg-white pt-[26px] pl-[34px]">
      <div className="flex h-[829px] w-[1419px] flex-col overflow-hidden rounded-[5px] bg-[#111111] shadow-[0_0_1px_rgba(0,0,0,0.5),0_8px_24px_rgba(0,0,0,0.28)]">
        <TabStrip />
        <Toolbar />
        <Bookmarks />
        <MeetHeader />
        <div className="ml-[128px] flex min-h-0 w-[1162px] flex-1 self-start overflow-hidden rounded-t-[3px] bg-[#fdfdfe]">
          <OperaSidebar />
          <div className="flex min-w-0 flex-1 flex-col">
            <OperaTabs />
            <OperaToolbar />
            <AppHeader />
            <ActionBar />
            <div className="flex min-h-0 flex-1 overflow-hidden">
              <FormPanel />
              <MapPanel />
            </div>
          </div>
        </div>
      </div>
    </div>
  );
}
